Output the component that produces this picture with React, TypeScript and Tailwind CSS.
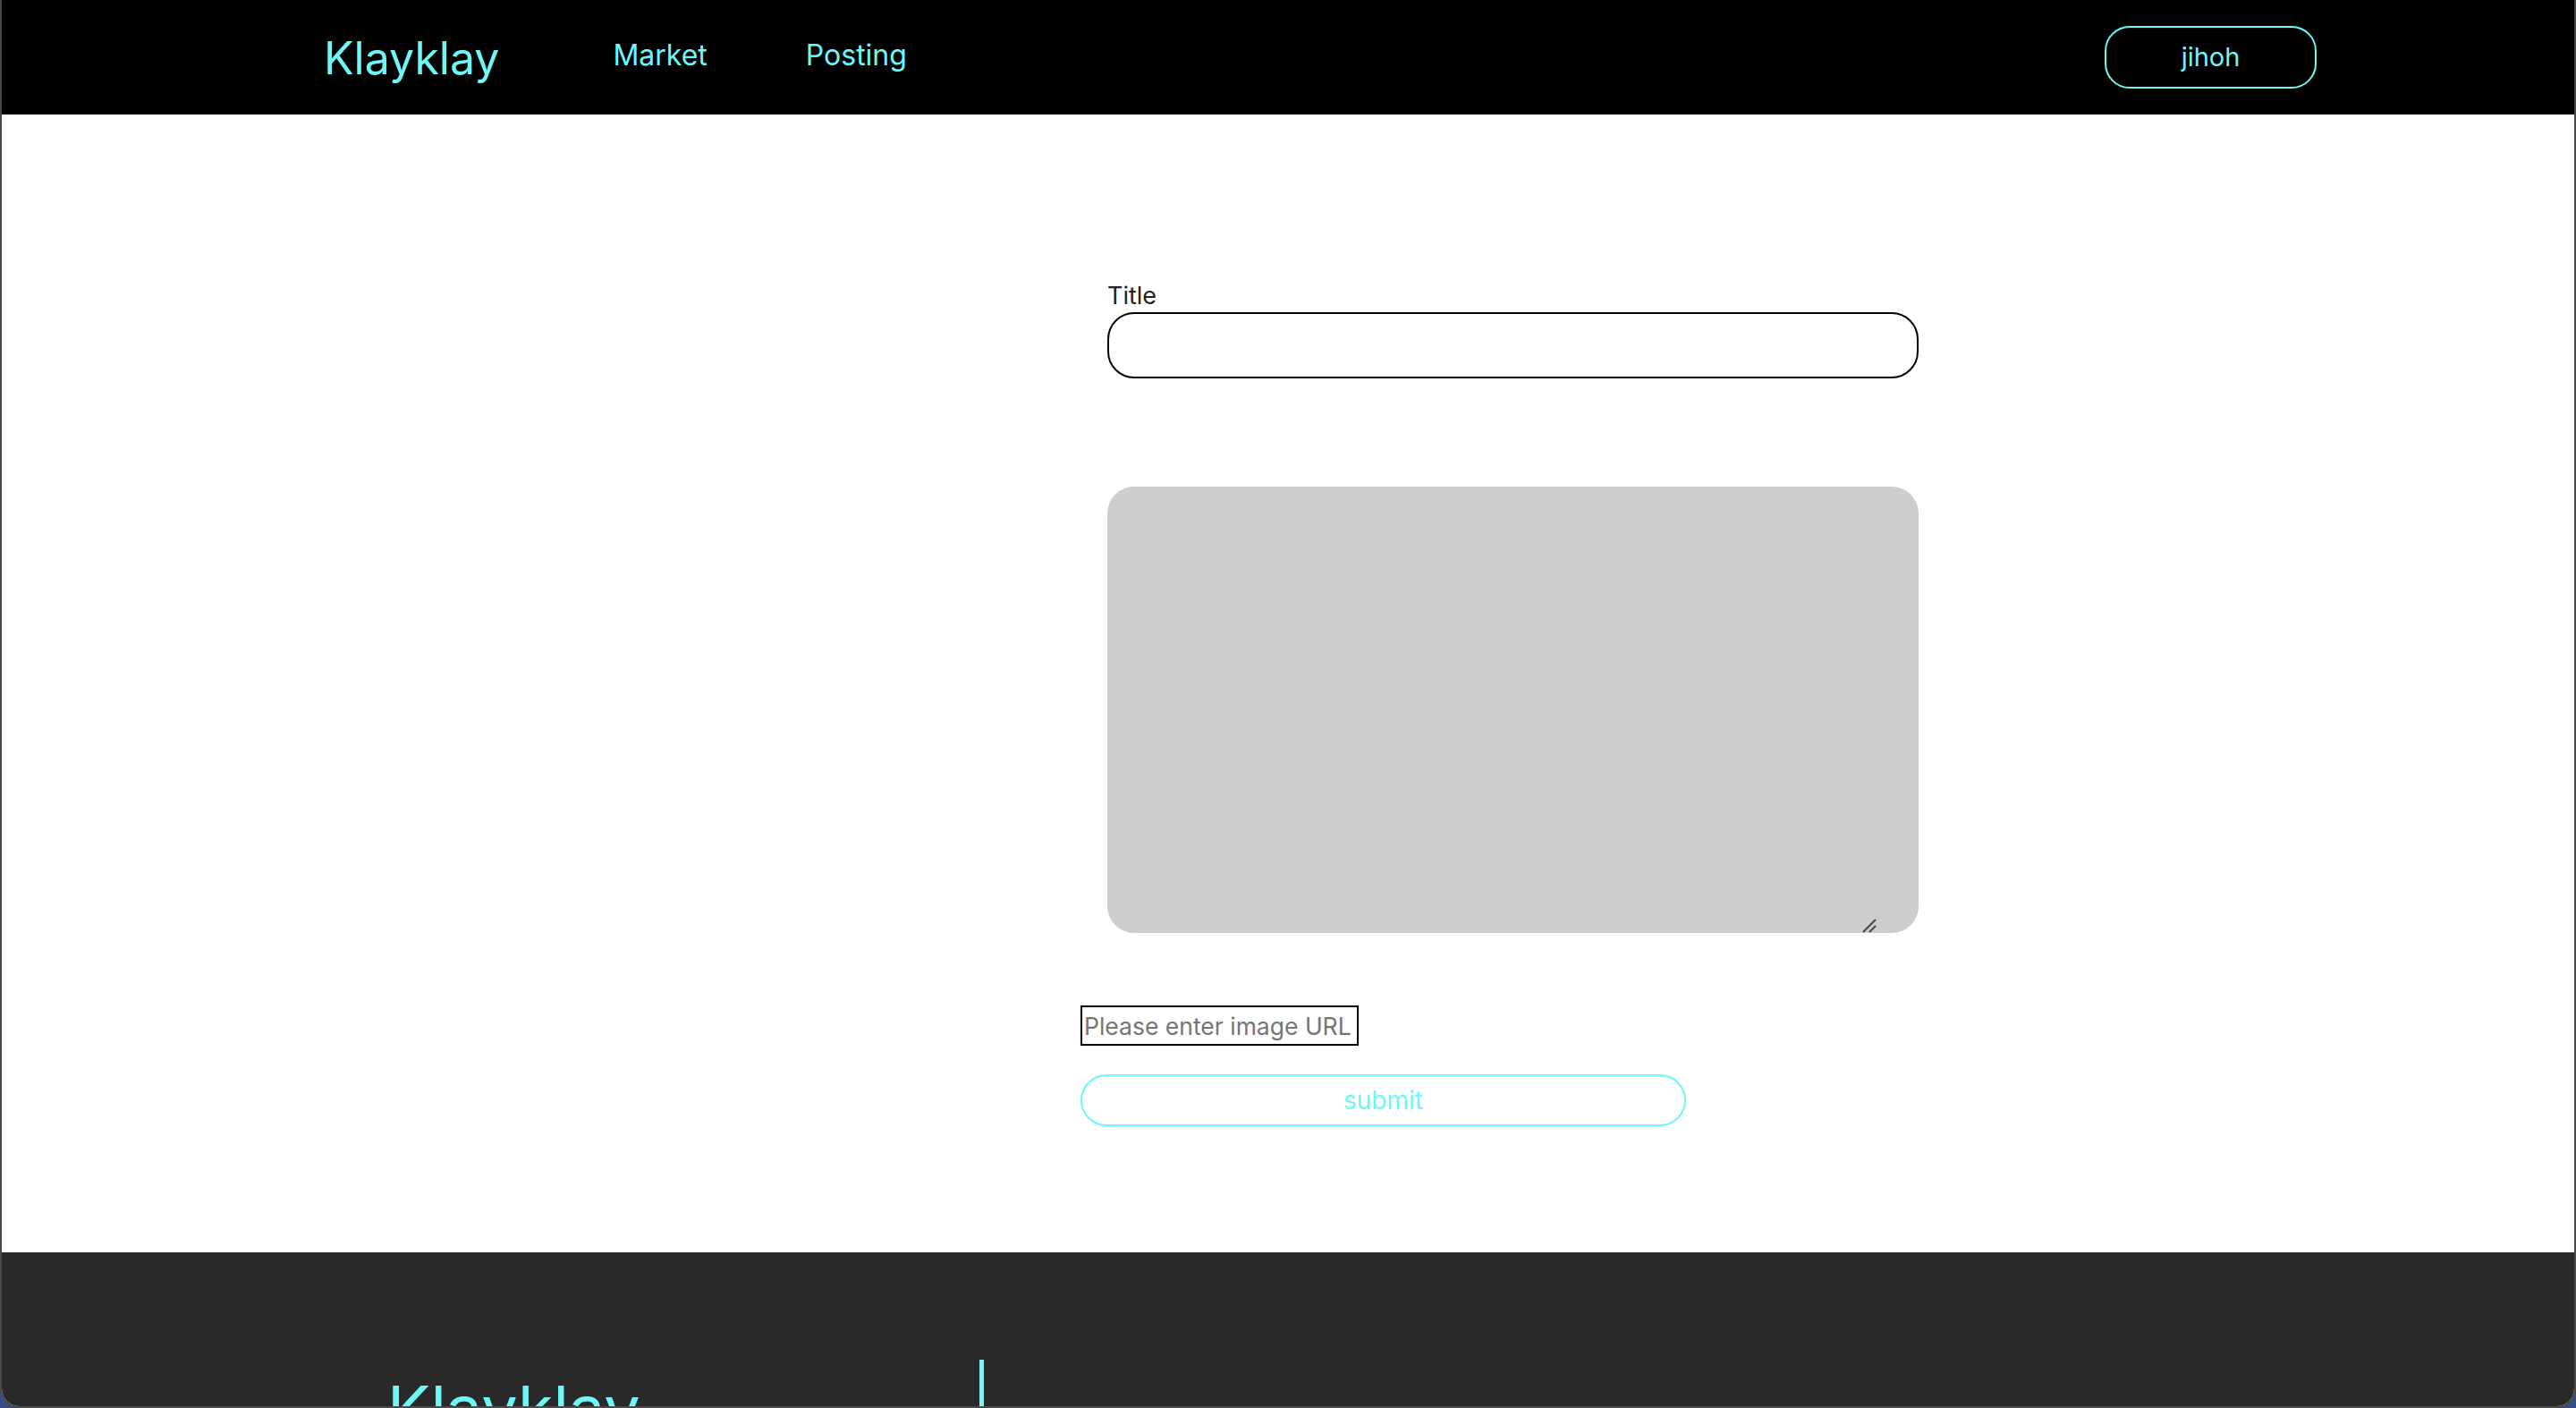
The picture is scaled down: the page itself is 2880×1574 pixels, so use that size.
import React from "react";

const CYAN = "text-[#6ef7f7]";

export default function App() {
  return (
    <div className="w-[2880px] h-[1574px] bg-[#3d4c86] overflow-hidden" style={{ fontFamily: "Inter, 'Noto Sans', sans-serif" }}>
      <div className="w-full h-full flex flex-col border-x-2 border-b-2 border-[#4a4a4a] rounded-b-[22px] overflow-hidden bg-white">
        {/* Header */}
        <header className="h-[128px] shrink-0 bg-black flex items-center pl-[360px] pr-[288px]">
          <div className={`text-[50px] leading-none ${CYAN} mt-[2px]`}>Klayklay</div>
          <nav className="flex items-center ml-[127px] gap-[110px] -mt-[4px]">
            <a className={`text-[32px] leading-none ${CYAN}`}>Market</a>
            <a className={`text-[32px] leading-none ${CYAN}`}>Posting</a>
          </nav>
          <div className="flex-1" />
          <button className={`w-[237px] h-[70px] rounded-[28px] border-2 border-[#6ef7f7] ${CYAN} text-[29px] flex items-center justify-center -mt-[1px]`}>
            jihoh
          </button>
        </header>

        {/* Main */}
        <main className="h-[1272px] shrink-0 bg-white pt-[185px] pl-[1206px]">
          <div className="flex flex-col w-[940px]">
            <label className="ml-[30px] text-[27px] leading-[32px] text-[#222] translate-y-[2px]">Title</label>
            <input className="ml-[30px] mt-[4px] w-[907px] h-[74px] rounded-[30px] border-2 border-black bg-white outline-none" />
            <div className="relative ml-[30px] mt-[121px] w-[907px] h-[499px]">
              <textarea className="w-full h-full rounded-[30px] bg-[#cdcdcd] resize-none outline-none border-0" />
              <svg className="absolute right-[47px] bottom-[0px]" width="16" height="16" viewBox="0 0 16 16">
                <line x1="1" y1="15" x2="15" y2="1" stroke="#444" strokeWidth="2" />
                <line x1="8" y1="15" x2="15" y2="8" stroke="#444" strokeWidth="2" />
              </svg>
            </div>
            <input
              placeholder="Please enter image URL"
              className="mt-[81px] w-[311px] h-[45px] border-2 border-black px-[2px] text-[26.5px] placeholder:text-[#757575] outline-none"
            />
            <button className={`mt-[32px] w-[677px] h-[58px] rounded-full border-2 border-[#6ef7f7] ${CYAN} text-[28px] flex items-center justify-center`}>
              submit
            </button>
          </div>
        </main>

        {/* Footer */}
        <footer className="flex-1 bg-[#292929] flex pl-[431px]">
          <div className="w-[662px] pt-[139px]">
            <div className={`text-[72px] leading-none ${CYAN}`}>Klayklay</div>
          </div>
          <div className="mt-[120px] w-[5px] h-[200px] bg-[#6ef7f7]" />
        </footer>
      </div>
    </div>
  );
}
